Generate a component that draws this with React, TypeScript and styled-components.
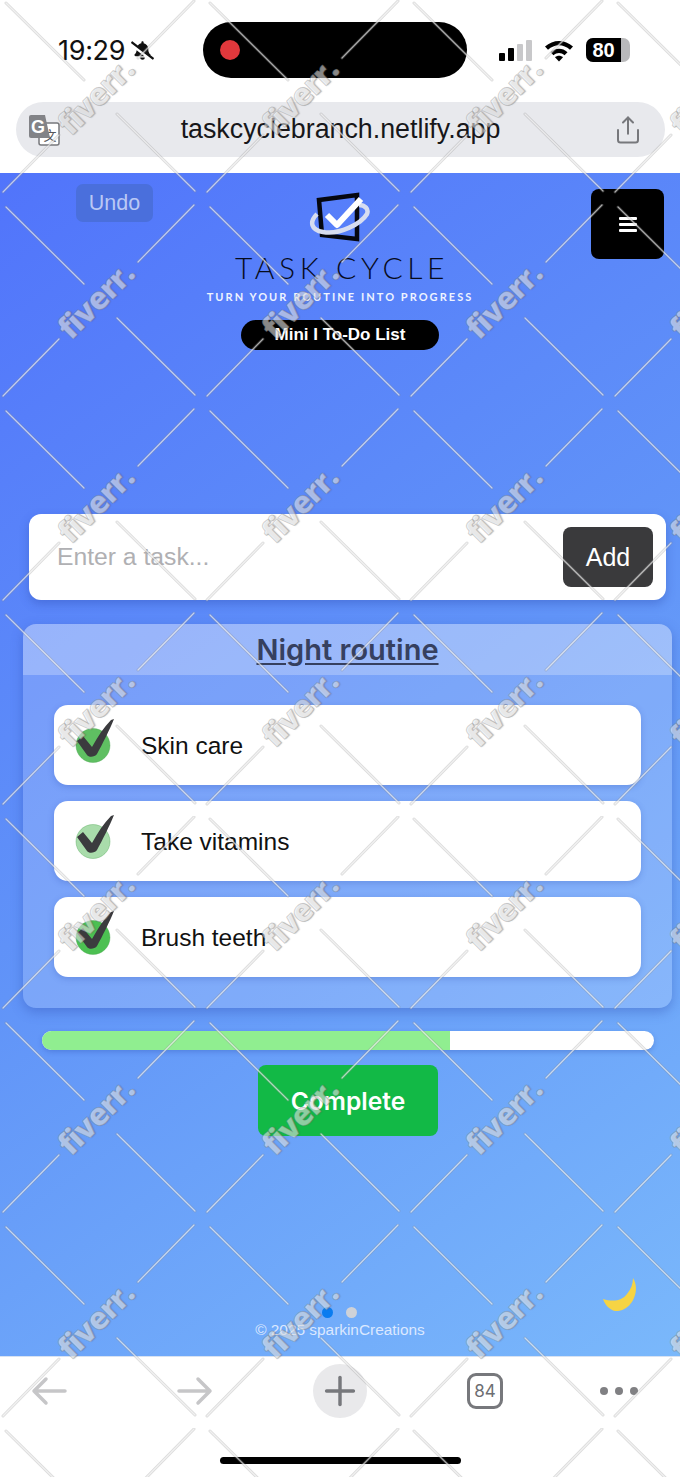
import React from "react";
import styled, { createGlobalStyle } from "styled-components";
import { Plus, Share } from "lucide-react";
import { FaBellSlash } from "react-icons/fa";

const tasks = [
  { name: "Skin care", tint: "#5fbf62" },
  { name: "Take vitamins", tint: "#a9dcab" },
  { name: "Brush teeth", tint: "#4cc052" },
];

const progress = 66.67;
const watermarkTiles = Array.from({ length: 32 }, (_, i) => i);

const Global = createGlobalStyle`
  html, body {
    margin: 0;
    padding: 0;
    background: #fff;
  }
  * {
    box-sizing: border-box;
  }
`;

export default function App() {
  return (
    <Screen>
      <Global />
      <StatusBar>
        <Clock>
          19:29
          <FaBellSlash size={23} />
        </Clock>
        <Island>
          <RecordDot />
        </Island>
        <StatusIcons>
          <Signal>
            <SignalBar $height={8} $on />
            <SignalBar $height={13} $on />
            <SignalBar $height={17} />
            <SignalBar $height={21} />
          </Signal>
          <svg width="30" height="24" viewBox="0 0 30 24">
            <path d="M1 8.5C9 1 21 1 29 8.5l-3 3.2C19.5 5.6 10.5 5.6 4 11.700z" fill="#000" />
            <path d="M6.500 14.200c5-4.600 12-4.600 17 0l-3 3.100c-3.400-3-7.600-3-11 0z" fill="#000" />
            <path d="M15 23.500l-4-4.300c2.400-2 5.600-2 8 0z" fill="#000" />
          </svg>
          <Battery>
            <BatteryLevel>80</BatteryLevel>
          </Battery>
        </StatusIcons>
      </StatusBar>

      <AddressRow>
        <AddressBar>
          <TranslateIcon width="32" height="32" viewBox="0 0 32 32">
            <rect x="11" y="9" width="20" height="22" rx="2" fill="#fff" stroke="#77787c" strokeWidth="1.5" />
            <text x="22" y="26" fontSize="13" fontFamily="Noto Sans CJK SC, sans-serif" textAnchor="middle" fill="#55565a">
              文
            </text>
            <path d="M3 1h14l5 23H3a2 2 0 0 1-2-2V3a2 2 0 0 1 2-2z" fill="#828387" />
            <text x="10" y="19" fontSize="18" fontWeight="700" fontFamily="Liberation Sans, sans-serif" textAnchor="middle" fill="#fff">
              G
            </text>
          </TranslateIcon>
          <AddressText>taskcyclebranch.netlify.app</AddressText>
          <ShareSlot>
            <Share size={30} strokeWidth={1.6} color="#77787c" />
          </ShareSlot>
        </AddressBar>
      </AddressRow>

      <Page>
        <Header>
          <UndoButton>Undo</UndoButton>
          <Brand>
            <svg width="62" height="50" viewBox="0 0 62 50">
              <path d="M10 8L48 3V47L13 43z" fill="none" stroke="#05070f" strokeWidth="4.500" />
              <path
                d="M8 22C0 30 2 38 14 40 30 43 52 32 58 22 60 17 56 13 50 13"
                fill="none"
                stroke="#d7ddf0"
                strokeWidth="4.500"
              />
              <path d="M18 23l10 10L52 7" fill="none" stroke="#fff" strokeWidth="6" strokeLinejoin="round" />
            </svg>
            <BrandName>TASK CYCLE</BrandName>
            <BrandTagline>TURN YOUR ROUTINE INTO PROGRESS</BrandTagline>
            <ModePill>Mini I To-Do List</ModePill>
          </Brand>
          <MenuButton>
            <MenuLine />
            <MenuLine />
            <MenuLine />
          </MenuButton>
        </Header>

        <TaskInputCard>
          <TaskInput placeholder="Enter a task..." />
          <AddButton>Add</AddButton>
        </TaskInputCard>

        <RoutinePanel>
          <RoutineHeader>
            <RoutineTitle>Night routine</RoutineTitle>
          </RoutineHeader>
          <TaskList>
            {tasks.map((task) => (
              <TaskRow key={task.name}>
                <CheckIcon width="42" height="48" viewBox="0 0 42 48">
                  <circle cx="19" cy="24.500" r="17" fill={task.tint} stroke="#3f9f46" strokeOpacity="0.35" />
                  <path
                    d="M3 20L9 15 18 26C24 15 30 6 37-1L40-2C36 8 28 24 23 33 21 36 15 37 13 34z"
                    fill="#3b3b3e"
                  />
                </CheckIcon>
                <TaskName>{task.name}</TaskName>
              </TaskRow>
            ))}
          </TaskList>
        </RoutinePanel>

        <ProgressTrack>
          <ProgressFill style={{ width: `${progress}%` }} />
        </ProgressTrack>

        <CompleteButton>Complete</CompleteButton>

        <Footer>
          <Pager>
            <PagerDot $active />
            <PagerDot />
          </Pager>
          <Copyright>© 2025 sparkinCreations</Copyright>
        </Footer>

        <ThemeToggle>
          <svg width="40" height="40" viewBox="0 0 40 40">
            <path
              d="M33 2C41 14 32 36 15 35 10 34 5 29 3 23c10 3 19 2 24-5 4-5 6-10 6-16z"
              fill="#f6d444"
            />
          </svg>
        </ThemeToggle>
      </Page>

      <BrowserBar>
        <svg width="36" height="30" viewBox="0 0 36 30">
          <path d="M34 15H3M15 3L3 15l12 12" fill="none" stroke="#c6c6c8" strokeWidth="3.500" strokeLinecap="round" strokeLinejoin="round" />
        </svg>
        <svg width="36" height="30" viewBox="0 0 36 30">
          <path d="M2 15h31M21 3l12 12-12 12" fill="none" stroke="#c6c6c8" strokeWidth="3.500" strokeLinecap="round" strokeLinejoin="round" />
        </svg>
        <NewTabButton>
          <Plus size={46} strokeWidth={1.8} color="#77787c" />
        </NewTabButton>
        <TabCount>84</TabCount>
        <MoreDots>
          <i />
          <i />
          <i />
        </MoreDots>
      </BrowserBar>
      <HomeArea>
        <HomeIndicator />
      </HomeArea>

      <Watermark>
        {watermarkTiles.map((tile) => (
          <WatermarkTile key={tile}>
            <svg width="204" height="204" viewBox="0 0 204 204">
              <g stroke="#8a8a8a" strokeOpacity="0.3" strokeWidth="3" strokeLinecap="round">
                <path d="M6 3L84 80M117 114L195 191M138 58L194 1M3 192L59 135" />
              </g>
              <g stroke="#fff" strokeOpacity="0.6" strokeWidth="1.200" strokeLinecap="round">
                <path d="M6 3L84 80M117 114L195 191M138 58L194 1M3 192L59 135" />
              </g>
            </svg>
            <WatermarkLabel>fiverr.</WatermarkLabel>
          </WatermarkTile>
        ))}
      </Watermark>
    </Screen>
  );
}

const Screen = styled.div`
  position: relative;
  width: 680px;
  height: 1477px;
  display: flex;
  flex-direction: column;
  overflow: hidden;
  background: #fff;
  font-family: "Liberation Sans", Arial, sans-serif;
`;

const StatusBar = styled.div`
  height: 102px;
  padding: 22px 50px 24px 58px;
  display: flex;
  align-items: center;
  justify-content: space-between;
`;

const Clock = styled.div`
  width: 118px;
  display: flex;
  align-items: center;
  gap: 6px;
  font-family: Inter, sans-serif;
  font-size: 27px;
  font-weight: 400;
  letter-spacing: -0.3px;
  color: #111;
`;

const Island = styled.div`
  width: 264px;
  height: 56px;
  padding-left: 17px;
  display: flex;
  align-items: center;
  border-radius: 28px;
  background: #000;
`;

const RecordDot = styled.span`
  width: 20px;
  height: 20px;
  border-radius: 50%;
  background: #e2383c;
`;

const StatusIcons = styled.div`
  width: 136px;
  padding-left: 5px;
  display: flex;
  align-items: center;
  justify-content: space-between;
`;

const Signal = styled.div`
  display: flex;
  align-items: flex-end;
  gap: 3px;
  height: 21px;
`;

const SignalBar = styled.span<{ $height: number; $on?: boolean }>`
  width: 6px;
  height: ${(p) => p.$height}px;
  border-radius: 1px;
  background: ${(p) => (p.$on ? "#000" : "#c8c8ca")};
`;

const Battery = styled.div`
  width: 44px;
  height: 24px;
  border-radius: 7px;
  overflow: hidden;
  display: flex;
  background: #b9b9bb;
`;

const BatteryLevel = styled.span`
  width: 35px;
  display: flex;
  align-items: center;
  justify-content: center;
  background: #000;
  color: #fff;
  font-size: 20px;
  font-weight: 700;
`;

const AddressRow = styled.div`
  height: 71px;
  padding: 0 15px 16px 16px;
`;

const AddressBar = styled.div`
  height: 55px;
  padding: 0 17px;
  display: grid;
  grid-template-columns: 1fr auto 1fr;
  align-items: center;
  border-radius: 28px;
  background: #e8e9ed;
`;

const TranslateIcon = styled.svg`
  margin-left: -5px;
`;

const AddressText = styled.span`
  font-size: 26.800px;
  color: #17171a;
`;

const ShareSlot = styled.div`
  padding-right: 5px;
  display: flex;
  justify-content: flex-end;
`;

const Page = styled.main`
  position: relative;
  height: 1183px;
  display: flex;
  flex-direction: column;
  background: linear-gradient(145deg, #5174fb 0%, #6194f8 50%, #7ab8fb 100%);
`;

const Header = styled.header`
  padding: 11px 16px 0;
  display: grid;
  grid-template-columns: 1fr auto 1fr;
  align-items: start;
`;

const UndoButton = styled.button`
  justify-self: start;
  width: 77px;
  height: 38px;
  margin-left: 60px;
  padding: 0;
  border: 0;
  border-radius: 7px;
  background: #4a6fdc;
  color: #b9c8f5;
  font-family: inherit;
  font-size: 21.500px;
`;

const Brand = styled.div`
  margin-top: 8px;
  display: flex;
  flex-direction: column;
  align-items: center;
`;

const BrandName = styled.div`
  margin: 7px 0 1px 4px;
  font-family: Lato, sans-serif;
  font-size: 30px;
  font-weight: 300;
  line-height: 36px;
  letter-spacing: 4.600px;
  color: #070b1c;
  white-space: nowrap;
`;

const BrandTagline = styled.div`
  margin-top: 4px;
  font-family: Lato, sans-serif;
  font-size: 11px;
  font-weight: 700;
  line-height: 14px;
  letter-spacing: 2.050px;
  color: #eef3ff;
  white-space: nowrap;
`;

const ModePill = styled.div`
  width: 198px;
  height: 30px;
  margin-top: 16px;
  display: flex;
  align-items: center;
  justify-content: center;
  border-radius: 15px;
  background: #000;
  color: #fff;
  font-size: 17px;
  font-weight: 700;
`;

const MenuButton = styled.button`
  justify-self: end;
  width: 73px;
  height: 70px;
  margin-top: 5px;
  padding: 0;
  display: flex;
  flex-direction: column;
  align-items: center;
  justify-content: center;
  gap: 3px;
  border: 0;
  border-radius: 8px;
  background: #000;
`;

const MenuLine = styled.span`
  width: 18px;
  height: 3px;
  border-radius: 1px;
  background: #fff;
`;

const TaskInputCard = styled.div`
  height: 86px;
  margin: 164px 14px 0 29px;
  padding: 0 13px 0 26px;
  display: flex;
  align-items: center;
  justify-content: space-between;
  border-radius: 12px;
  background: #fff;
  box-shadow: 0 4px 10px rgba(40, 70, 170, 0.35);
`;

const TaskInput = styled.input`
  flex: 1;
  padding: 0 2px;
  border: 0;
  outline: 0;
  background: transparent;
  font-family: inherit;
  font-size: 24.700px;
  &::placeholder {
    color: #b0b0b3;
  }
`;

const AddButton = styled.button`
  width: 90px;
  height: 60px;
  border: 0;
  border-radius: 8px;
  background: #3a3a3c;
  color: #fff;
  font-family: inherit;
  font-size: 25px;
`;

const RoutinePanel = styled.section`
  height: 384px;
  margin: 24px 8px 0 23px;
  border-radius: 13px;
  overflow: hidden;
  background: rgba(255, 255, 255, 0.17);
  box-shadow: 0 4px 12px rgba(40, 70, 170, 0.35);
`;

const RoutineHeader = styled.div`
  height: 51px;
  display: flex;
  align-items: center;
  justify-content: center;
  background: rgba(255, 255, 255, 0.25);
`;

const RoutineTitle = styled.h2`
  margin: 0;
  font-family: Inter, sans-serif;
  font-size: 29px;
  font-weight: 600;
  color: #36405f;
  text-decoration: underline;
  text-underline-offset: 3px;
`;

const TaskList = styled.div`
  padding: 30px 31px 0;
  display: flex;
  flex-direction: column;
  gap: 16px;
`;

const TaskRow = styled.div`
  height: 80px;
  padding-left: 20px;
  display: flex;
  align-items: center;
  border-radius: 14px;
  background: #fff;
  box-shadow: 0 2px 6px rgba(40, 70, 170, 0.25);
`;

const CheckIcon = styled.svg`
  overflow: visible;
`;

const TaskName = styled.span`
  margin: 2px 0 0 25px;
  font-size: 24.500px;
  color: #111;
`;

const ProgressTrack = styled.div`
  height: 19px;
  margin: 23px 26px 0 42px;
  border-radius: 10px;
  overflow: hidden;
  background: #fff;
  box-shadow: 0 2px 5px rgba(40, 70, 170, 0.3);
`;

const ProgressFill = styled.div`
  height: 100%;
  background: #90ee90;
`;

const CompleteButton = styled.button`
  width: 180px;
  height: 71px;
  margin: 15px 0 0 258px;
  border: 0;
  border-radius: 8px;
  background: #12b946;
  color: #fff;
  font-family: Inter, sans-serif;
  font-size: 24.600px;
  font-weight: 600;
`;

const Footer = styled.footer`
  margin-top: auto;
  padding-bottom: 17px;
  display: flex;
  flex-direction: column;
  align-items: center;
`;

const Pager = styled.div`
  margin-left: -1px;
  display: flex;
  gap: 13px;
`;

const PagerDot = styled.span<{ $active?: boolean }>`
  width: 11px;
  height: 11px;
  border-radius: 50%;
  background: ${(p) => (p.$active ? "#0a7cf0" : "#cfd2d8")};
`;

const Copyright = styled.div`
  margin-top: 3px;
  font-size: 15.400px;
  line-height: 18px;
  color: #dbe8ff;
`;

const ThemeToggle = styled.div`
  position: absolute;
  right: 40px;
  bottom: 40px;
  width: 40px;
  height: 40px;
`;

const BrowserBar = styled.nav`
  height: 70px;
  padding: 0 0 1px 31px;
  display: grid;
  grid-template-columns: 146px 136px 154px 133px 60px;
  align-items: center;
  border-top: 1px solid #d7e2f2;
`;

const NewTabButton = styled.div`
  width: 54px;
  height: 54px;
  display: flex;
  align-items: center;
  justify-content: center;
  border-radius: 50%;
  background: #e9e9eb;
`;

const TabCount = styled.div`
  width: 36px;
  height: 36px;
  display: flex;
  align-items: center;
  justify-content: center;
  border: 3px solid #77787c;
  border-radius: 9px;
  color: #6d6e72;
  font-family: Inter, sans-serif;
  font-size: 17px;
  font-weight: 400;
`;

const MoreDots = styled.div`
  display: flex;
  gap: 7px;
  i {
    width: 8px;
    height: 8px;
    border-radius: 50%;
    background: #808083;
  }
`;

const HomeArea = styled.div`
  flex: 1;
  padding-top: 31px;
  display: flex;
  justify-content: center;
`;

const HomeIndicator = styled.div`
  width: 241px;
  height: 7px;
  border-radius: 4px;
  background: #000;
`;

const Watermark = styled.div`
  position: absolute;
  inset: 0;
  display: grid;
  grid-template-columns: repeat(4, 204px);
  grid-auto-rows: 204px;
  pointer-events: none;
`;

const WatermarkTile = styled.div`
  position: relative;
  width: 204px;
  height: 204px;
`;

const WatermarkLabel = styled.span`
  position: absolute;
  left: 95px;
  top: 96px;
  transform: translate(-50%, -50%) rotate(-45deg);
  font-family: "Open Sans", sans-serif;
  font-size: 31px;
  font-weight: 800;
  letter-spacing: -1px;
  color: rgba(255, 255, 255, 0.5);
  -webkit-text-stroke: 1px rgba(120, 120, 120, 0.35);
  text-shadow: 1px 1px 1px rgba(70, 70, 70, 0.25);
  white-space: nowrap;
`;
